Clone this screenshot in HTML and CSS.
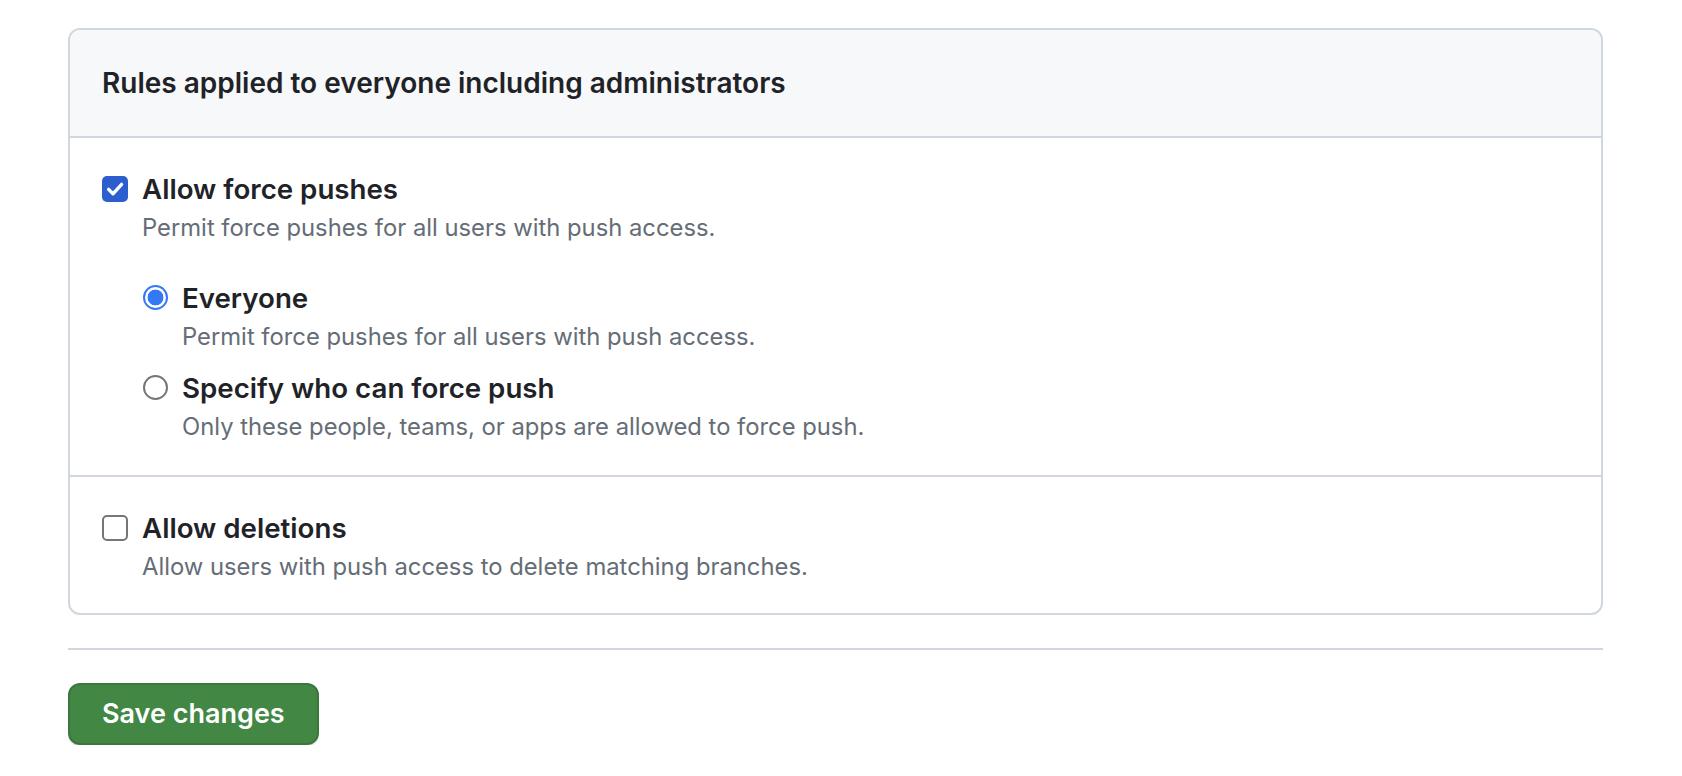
FILE: index.html
```html
<!DOCTYPE html>
<html lang="en">
<head>
<meta charset="utf-8">
<title>Branch protection rules</title>
<link rel="stylesheet" href="styles.css">
</head>
<body>
<main class="page">
  <section class="box">
    <header class="box-header">
      <h3 class="box-title">Rules applied to everyone including administrators</h3>
    </header>

    <div class="box-row">
      <label class="option">
        <span class="checkbox checked">
          <svg viewBox="0 0 26 26" width="26" height="26" aria-hidden="true">
            <path d="M6.6 13.4 L11 17.8 L19.6 8.4" fill="none" stroke="#fff" stroke-width="3.4" stroke-linecap="round" stroke-linejoin="round"/>
          </svg>
        </span>
        <span class="option-body">
          <span class="option-title">Allow force pushes</span>
          <span class="option-note">Permit force pushes for all users with push access.</span>
        </span>
      </label>

      <div class="sub-options">
        <label class="option">
          <span class="radio checked"></span>
          <span class="option-body">
            <span class="option-title">Everyone</span>
            <span class="option-note">Permit force pushes for all users with push access.</span>
          </span>
        </label>
        <label class="option option-tight">
          <span class="radio"></span>
          <span class="option-body">
            <span class="option-title">Specify who can force push</span>
            <span class="option-note">Only these people, teams, or apps are allowed to force push.</span>
          </span>
        </label>
      </div>
    </div>

    <div class="box-row box-row-last">
      <label class="option">
        <span class="checkbox"></span>
        <span class="option-body">
          <span class="option-title">Allow deletions</span>
          <span class="option-note">Allow users with push access to delete matching branches.</span>
        </span>
      </label>
    </div>
  </section>

  <hr class="divider">

  <button class="btn-primary" type="button">Save changes</button>
</main>
</body>
</html>
```

FILE: styles.css
```css
* {
  box-sizing: border-box;
}

html, body {
  margin: 0;
  padding: 0;
  background: #ffffff;
}

body {
  font-family: Inter, "Noto Sans", "Liberation Sans", sans-serif;
  color: #1f2328;
}

.page {
  width: 1535px;
  margin-left: 68px;
  padding-top: 28px;
}

.box {
  border: 2px solid #d0d7de;
  border-radius: 12px;
  overflow: hidden;
  background: #ffffff;
}

.box-header {
  background: #f6f8fa;
  border-bottom: 2px solid #d0d7de;
  padding: 32px 32px 32px 32px;
}

.box-title {
  margin: 0;
  font-size: 28px;
  line-height: 42px;
  font-weight: 600;
  color: #1f2328;
}

.box-row {
  padding: 31px 32px 30px 32px;
  border-bottom: 2px solid #d0d7de;
}

.box-row-last {
  border-bottom: 0;
  padding-top: 31px;
  padding-bottom: 28px;
}

.option {
  display: flex;
  align-items: flex-start;
  gap: 14px;
}

.option-body {
  display: flex;
  flex-direction: column;
}

.option-title {
  font-size: 27.7px;
  line-height: 40px;
  font-weight: 600;
  color: #1f2328;
}

.option-note {
  font-size: 23.8px;
  line-height: 36px;
  color: #656d76;
  margin-top: 1px;
}

.checkbox {
  flex: none;
  width: 26px;
  height: 26px;
  margin-top: 7px;
  border: 2px solid #767676;
  border-radius: 5px;
  background: #ffffff;
  display: flex;
  align-items: center;
  justify-content: center;
}

.checkbox.checked {
  border: 0;
  border-radius: 5px;
  background: #2c5fcd;
}

.sub-options {
  padding-left: 41px;
  margin-top: 32px;
  display: flex;
  flex-direction: column;
  gap: 13px;
}

.radio {
  flex: none;
  width: 25px;
  height: 25px;
  margin-top: 7px;
  border-radius: 50%;
  border: 2px solid #767676;
  background: #ffffff;
}

.radio.checked {
  border: 2.5px solid #3478f6;
  background: radial-gradient(circle, #3478f6 0 7.6px, #ffffff 8.2px);
}

.divider {
  margin: 33px 0 0 0;
  border: 0;
  border-top: 2px solid #d0d7de;
  height: 0;
}

.btn-primary {
  margin-top: 33px;
  font-family: inherit;
  font-size: 27px;
  line-height: 40px;
  font-weight: 600;
  color: #ffffff;
  background: #428744;
  border: 2px solid #3b763d;
  border-radius: 12px;
  padding: 9px 32px;
  box-shadow: 0 2px 0 rgba(31, 35, 40, 0.1);
  cursor: pointer;
}
```
